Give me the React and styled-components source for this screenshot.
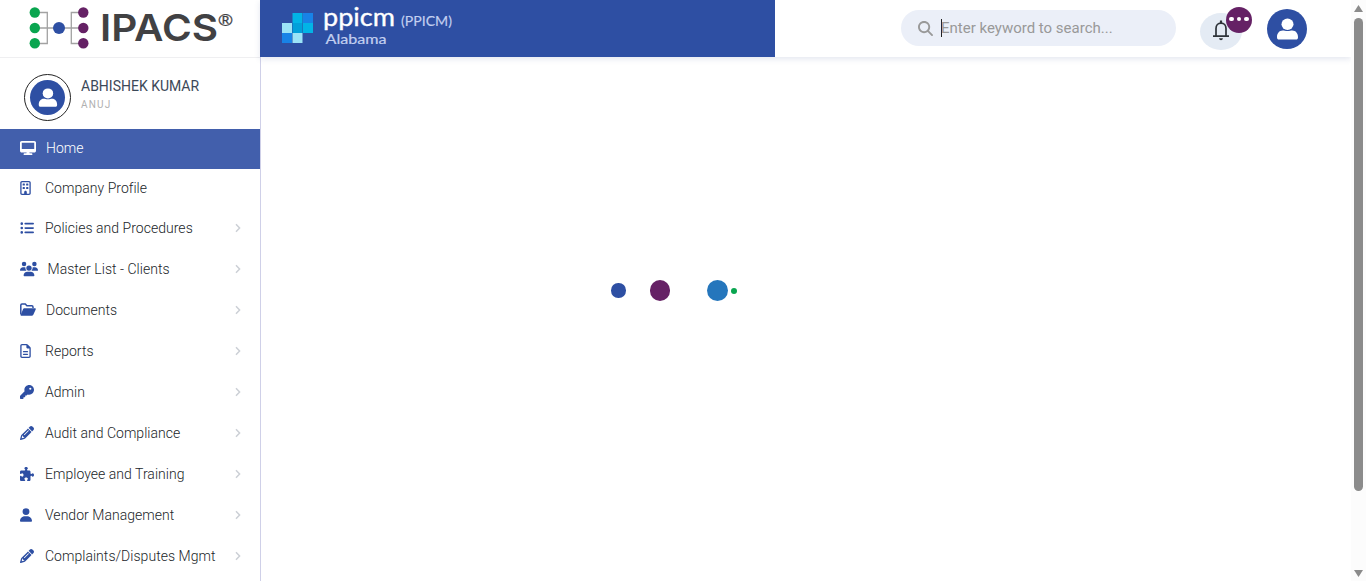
import React from 'react';
import styled, { createGlobalStyle } from 'styled-components';
import {
  FaDesktop, FaRegBuilding, FaListUl, FaUsers, FaRegFileLines, FaKey,
  FaPencil, FaPuzzlePiece, FaUser, FaMagnifyingGlass,
} from 'react-icons/fa6';

const GlobalStyle = createGlobalStyle`
  * { box-sizing: border-box; }
  body { margin: 0; background: #fff; font-family: Roboto, "Liberation Sans", sans-serif; overflow: hidden; }
`;

const Page = styled.div`
  display: flex;
  width: 100%;
  height: 581px;
  overflow: hidden;
`;

const Sidebar = styled.aside`
  width: 261px;
  flex: none;
  border-right: 1px solid #cfd0e8;
`;

const LogoBar = styled.div`
  height: 58px;
  border-bottom: 1px solid #efeff1;
  svg { display: block; }
`;

const Profile = styled.div`
  height: 71px;
  display: flex;
  padding: 16px 0 0 24px;
  gap: 10px;
`;

const AvatarRing = styled.div`
  width: 47px;
  height: 47px;
  border: 1px solid #222;
  border-radius: 50%;
  display: flex;
  align-items: center;
  justify-content: center;
`;

const AvatarDisc = styled.div`
  width: ${p => p.$size}px;
  height: ${p => p.$size}px;
  border-radius: 50%;
  background: #2e4fa3;
  display: flex;
  svg { width: 100%; height: 100%; }
`;

const UserName = styled.div`
  font-size: 14px;
  line-height: 16px;
  margin-top: 4px;
  color: #3c4858;
  white-space: nowrap;
`;

const UserRole = styled.div`
  font-size: 10px;
  line-height: 12px;
  margin-top: 5px;
  letter-spacing: 1.2px;
  color: #b0b0b0;
`;

const MenuItem = styled.a`
  height: ${p => p.$height || 41}px;
  display: flex;
  align-items: center;
  padding: 0 18px 2px 20px;
  background: ${p => (p.$active ? '#425fac' : 'transparent')};
  color: ${p => (p.$active ? '#fff' : '#212529')};
  font-size: 14px;
  font-weight: 300;
  letter-spacing: 0.03px;
  white-space: nowrap;
`;

const MenuIcon = styled.span`
  width: ${p => p.$slot}px;
  flex: none;
  display: flex;
  color: ${p => (p.$active ? '#fff' : '#2e4fa3')};
`;

const MenuLabel = styled.span`
  flex: 1;
`;

const Chevron = styled.svg`
  width: 8px;
  height: 10px;
  fill: none;
  stroke: #ccd0d6;
  stroke-width: 1.5;
`;

const Main = styled.main`
  flex: 1;
  min-width: 0;
  display: flex;
  flex-direction: column;
`;

const Header = styled.header`
  height: 57px;
  flex: none;
  display: flex;
  margin-left: -1px;
  box-shadow: 0 2px 6px rgba(60, 75, 140, 0.14);
`;

const Tenant = styled.div`
  width: 515px;
  background: #2e4fa3;
  svg { display: block; }
`;

const Tools = styled.div`
  flex: 1;
  display: flex;
  align-items: flex-start;
  padding-left: 126px;
`;

const SearchBox = styled.label`
  width: 275px;
  height: 36px;
  margin-top: 10px;
  border-radius: 18px;
  background: #ebeff8;
  display: flex;
  align-items: center;
  padding-left: 17px;
  color: #999;
  font-size: 15px;
`;

const Caret = styled.span`
  width: 1px;
  height: 18px;
  margin: 0 -1px 0 8px;
  background: #222;
`;

const BellButton = styled.div`
  position: relative;
  width: 42px;
  height: 37px;
  margin: 13px 0 0 24px;
  padding-bottom: 2px;
  border-radius: 50%;
  background: #e4ebf4;
  display: flex;
  align-items: center;
  justify-content: center;
`;

const Badge = styled.span`
  position: absolute;
  left: 26px;
  top: -6px;
  width: 26px;
  height: 26px;
  border-radius: 50%;
  background: #652165;
  display: flex;
  align-items: center;
  justify-content: center;
  gap: 3px;
  padding-bottom: 2px;
`;

const BadgeDot = styled.i`
  width: 4.500px;
  height: 4.500px;
  border-radius: 50%;
  background: #fff;
`;

const Account = styled.div`
  margin: 9px 0 0 25px;
`;

const Content = styled.section`
  flex: 1;
  display: flex;
  align-items: flex-start;
  padding: 223px 0 0 350px;
`;

const Loader = styled.div`
  display: flex;
  align-items: center;
  height: 21px;
`;

const LoaderDot = styled.span`
  width: ${p => p.$size}px;
  height: ${p => p.$size}px;
  margin-right: ${p => p.$gap || 0}px;
  border-radius: 50%;
  background: ${p => p.$color};
`;

const Scrollbar = styled.div`
  width: 15px;
  flex: none;
  background: #fcfcfc;
  display: flex;
  flex-direction: column;
  align-items: center;
  padding: 5px 0 4px;
  svg { display: block; fill: #8b8b8b; }
`;

const Thumb = styled.div`
  width: 9px;
  height: 473px;
  margin: 6px 0 auto;
  border-radius: 5px;
  background: #8b8b8b;
`;

const PersonGlyph = () => (
  <svg viewBox="0 0 40 40" fill="#fff">
    <ellipse cx="20.500" cy="15.300" rx="6" ry="5.700" />
    <path d="M10 28.200c0-4 2.200-6.800 5.800-6.800 1.500 0 2.500.7 4.700.7s3.200-.7 4.700-.7c3.600 0 5.800 2.800 5.800 6.800 0 1.500-.6 2.300-2.200 2.300H12.200c-1.600 0-2.200-.8-2.200-2.300z" />
  </svg>
);

const FolderIcon = () => (
  <svg width="16" height="14" viewBox="0 0 16 14">
    <path d="M.8 11.500V2.200Q.8 1 2 1h3.300l1.600 1.700h5Q13 2.700 13 4v1" fill="none" stroke="currentColor" strokeWidth="1.500" />
    <path d="M4.200 5.300H15q1.200 0 .7 1.100l-2.400 5.300q-.5 1.100-1.600 1.100H1.500q-1.200 0-.7-1.100L3 6.200q.4-.9 1.200-.9z" fill="currentColor" />
  </svg>
);

const IpacsLogo = () => (
  <svg width="260" height="57" viewBox="0 0 260 57">
    <g fill="none" stroke="#a2a2a2" strokeWidth="1.300">
      <path d="M35 12.500H47.300V43.500H35M35 28H83M83 12.500H71.300V43.500H83" />
    </g>
    <g fill="#09a54f">
      <circle cx="34.800" cy="12.500" r="5.200" />
      <circle cx="34.800" cy="28" r="5.200" />
      <circle cx="34.800" cy="43.300" r="5.200" />
    </g>
    <g fill="#652165">
      <circle cx="83.300" cy="12.500" r="5.200" />
      <circle cx="83.300" cy="28" r="5.200" />
      <circle cx="83.300" cy="43.300" r="5.200" />
    </g>
    <circle cx="59" cy="28" r="6" fill="#2e4fa3" />
    <text x="100" y="41" fontFamily="Inter, sans-serif" fontWeight="600" fontSize="37.500" fill="#414143" textLength="118" lengthAdjust="spacingAndGlyphs">IPACS</text>
    <text x="218.500" y="25.500" fontFamily="Liberation Sans, sans-serif" fontSize="17" fill="#414143" stroke="#414143" strokeWidth=".3" textLength="14" lengthAdjust="spacingAndGlyphs">®</text>
  </svg>
);

const TenantLogo = () => (
  <svg width="515" height="57" viewBox="260 0 515 57" fontFamily="Lato, sans-serif">
    <path fill="#02b4e6" d="M292.500 13h10v10h-10zM303 23h10v10h-10z" />
    <path fill="#1883e7" d="M303 13h10v10h-10zM282 33h10v10h-10z" />
    <path fill="#9be3f7" d="M282 23h10v10h-10zM292.500 33h10v10h-10z" />
    <path fill="#02a0da" d="M292.500 23h10v10h-10z" />
    <text x="323" y="26" fontSize="25" fill="#fff" stroke="#fff" strokeWidth=".35" textLength="72" lengthAdjust="spacingAndGlyphs">ppicm</text>
    <text x="401" y="26" fontSize="13.500" fill="#c3d0f0" stroke="#c3d0f0" strokeWidth=".15" textLength="51" lengthAdjust="spacingAndGlyphs">(PPICM)</text>
    <text x="325.500" y="44" fontSize="13.500" fill="#c3d0f0" stroke="#c3d0f0" strokeWidth=".2" textLength="61" lengthAdjust="spacingAndGlyphs">Alabama</text>
  </svg>
);

const BellIcon = () => (
  <svg width="18" height="21" viewBox="0 0 18 21" fill="none" stroke="#2d3339" strokeWidth="1.700">
    <path d="M4 16V8.500C4 5.300 6.100 3.200 9 3.200s5 2.100 5 5.300V16M1 16.200h16" />
    <path d="M9 .5v2.500" strokeWidth="2.200" />
    <path d="M7 18.200h4q-.4 2-2 2t-2-2z" fill="#2d3339" stroke="none" />
  </svg>
);

const items = [
  { label: 'Home', icon: <FaDesktop size={16} />, slot: 26, height: 40, active: true },
  { label: 'Company Profile', icon: <FaRegBuilding size={14} style={{ width: 11 }} />, slot: 25, height: 39 },
  { label: 'Policies and Procedures', icon: <FaListUl size={14} />, slot: 25, more: true },
  { label: 'Master List - Clients', icon: <FaUsers size={18} />, slot: 27.500, more: true },
  { label: 'Documents', icon: <FolderIcon />, slot: 26, more: true },
  { label: 'Reports', icon: <FaRegFileLines size={14} style={{ width: 11 }} />, slot: 25, more: true },
  { label: 'Admin', icon: <FaKey size={14} />, slot: 25, more: true },
  { label: 'Audit and Compliance', icon: <FaPencil size={14} />, slot: 25, more: true },
  { label: 'Employee and Training', icon: <FaPuzzlePiece size={14} />, slot: 25, more: true },
  { label: 'Vendor Management', icon: <FaUser size={14} style={{ width: 12 }} />, slot: 25, more: true },
  { label: 'Complaints/Disputes Mgmt', icon: <FaPencil size={14} />, slot: 25, more: true },
];

export default function App() {
  return (
    <Page>
      <GlobalStyle />
      <Sidebar>
        <LogoBar><IpacsLogo /></LogoBar>
        <Profile>
          <AvatarRing><AvatarDisc $size={35}><PersonGlyph /></AvatarDisc></AvatarRing>
          <div>
            <UserName>ABHISHEK KUMAR</UserName>
            <UserRole>ANUJ</UserRole>
          </div>
        </Profile>
        <nav>
          {items.map(item => (
            <MenuItem key={item.label} $height={item.height} $active={item.active}>
              <MenuIcon $slot={item.slot} $active={item.active}>{item.icon}</MenuIcon>
              <MenuLabel>{item.label}</MenuLabel>
              {item.more && <Chevron viewBox="0 0 8 10"><path d="M2 1.200 5.600 5 2 8.800" /></Chevron>}
            </MenuItem>
          ))}
        </nav>
      </Sidebar>
      <Main>
        <Header>
          <Tenant><TenantLogo /></Tenant>
          <Tools>
            <SearchBox>
              <FaMagnifyingGlass size={15} />
              <Caret />
              Enter keyword to search...
            </SearchBox>
            <BellButton>
              <BellIcon />
              <Badge><BadgeDot /><BadgeDot /><BadgeDot /></Badge>
            </BellButton>
            <Account><AvatarDisc $size={40}><PersonGlyph /></AvatarDisc></Account>
          </Tools>
        </Header>
        <Content>
          <Loader>
            <LoaderDot $size={14.5} $gap={24} $color="#2e4fa3" />
            <LoaderDot $size={20.5} $gap={37} $color="#652165" />
            <LoaderDot $size={21} $gap={3} $color="#2576bc" />
            <LoaderDot $size={6} $color="#09a54f" />
          </Loader>
        </Content>
      </Main>
      <Scrollbar>
        <svg width="9" height="7" viewBox="0 0 9 7"><path d="M4.500 0 9 7H0z" /></svg>
        <Thumb />
        <svg width="9" height="7" viewBox="0 0 9 7"><path d="M0 0h9L4.500 7z" /></svg>
      </Scrollbar>
    </Page>
  );
}
